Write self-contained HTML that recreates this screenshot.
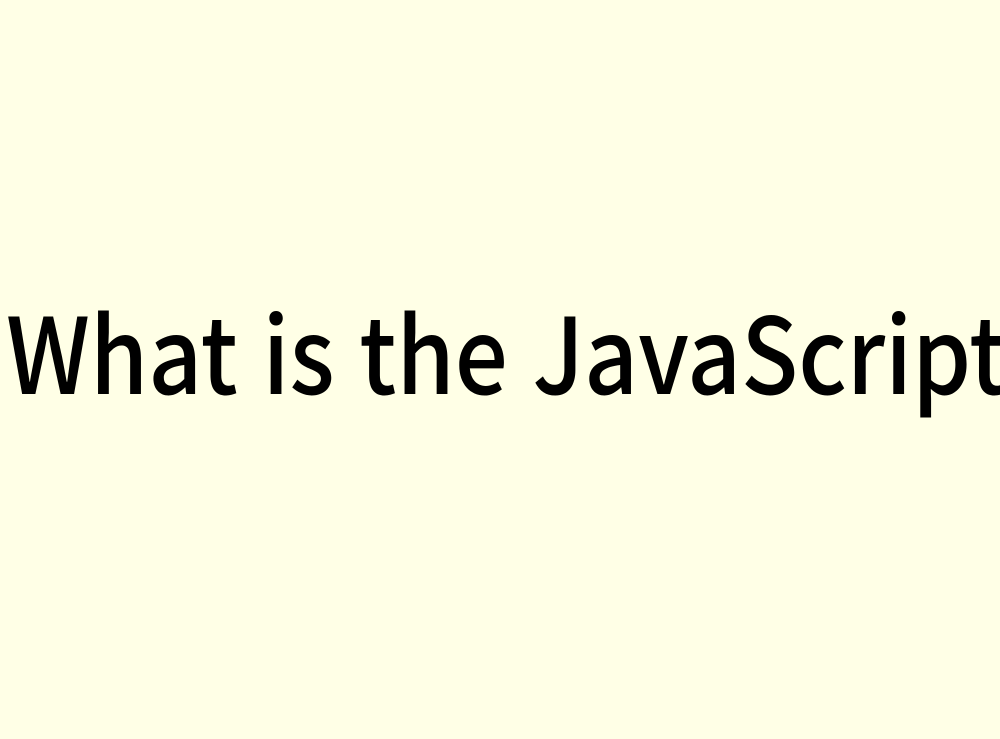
<!DOCTYPE html>
<html><head><meta charset="utf-8"><style>
html,body{margin:0;padding:0;width:1000px;height:739px;background:#FFFFE6;overflow:hidden}
.t{position:absolute;left:6px;top:297px;font-family:"Noto Sans CJK JP","Liberation Sans",sans-serif;font-weight:500;font-size:105px;line-height:1;color:#000;white-space:nowrap;transform:scaleX(0.894);transform-origin:0 0;word-spacing:4px}
</style></head><body>
<div class="t">What is the JavaScript</div>
</body></html>
